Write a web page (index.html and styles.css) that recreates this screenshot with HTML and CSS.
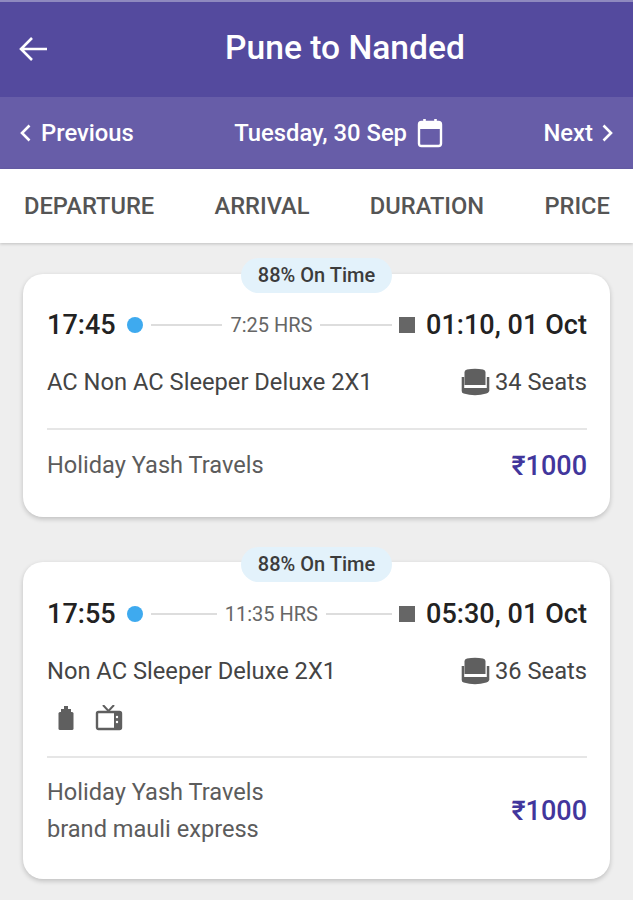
FILE: index.html
```html
<!DOCTYPE html>
<html lang="en">
<head>
<meta charset="utf-8">
<title>Pune to Nanded</title>
<link rel="stylesheet" href="styles.css">
</head>
<body>
<header class="appbar">
  <svg class="back" width="32" height="28" viewBox="0 0 32 28"><path d="M29 14H3M14 3 3 14l11 11" fill="none" stroke="#fff" stroke-width="2.600"/></svg>
  <h1 class="title">Pune to Nanded</h1>
</header>
<nav class="datebar">
  <div class="navlink prev">
    <svg width="12" height="20" viewBox="0 0 12 20"><path d="M10.500 2.500 3 10l7.500 7.500" fill="none" stroke="#fff" stroke-width="2.600"/></svg>
    <span>Previous</span>
  </div>
  <div class="date">
    <span>Tuesday, 30 Sep</span>
    <svg width="26" height="30" viewBox="0 0 26 30"><path d="M2 6.500Q2 4 4.500 4h17Q24 4 24 6.500v19q0 2.500-2.500 2.500h-17Q2 28 2 25.500z" fill="none" stroke="#fff" stroke-width="2.400"/><path d="M2 5h22v6H2z" fill="#fff"/><path d="M7.500 1v5M18.500 1v5" stroke="#fff" stroke-width="2.600"/></svg>
  </div>
  <div class="navlink">
    <span>Next</span>
    <svg width="12" height="20" viewBox="0 0 12 20"><path d="M1.500 2.500 9 10l-7.500 7.500" fill="none" stroke="#fff" stroke-width="2.600"/></svg>
  </div>
</nav>
<div class="tabs">
  <span>DEPARTURE</span><span>ARRIVAL</span><span>DURATION</span><span>PRICE</span>
</div>
<main class="list">
  <article class="card">
    <div class="badge">88% On Time</div>
    <div class="times">
      <strong class="time">17:45</strong>
      <i class="dot"></i>
      <i class="line"></i>
      <span class="dur">7:25 HRS</span>
      <i class="line"></i>
      <i class="stop"></i>
      <strong class="time">01:10, 01 Oct</strong>
    </div>
    <div class="info">
      <span>AC Non AC Sleeper Deluxe 2X1</span>
      <span class="seats">
        <svg width="29" height="30" viewBox="0 0 29 30"><path d="M3.500 5Q3.500 3 6 2.500q8-1.500 16 0 2.500.5 2.500 2.500V18H3.500z" fill="#5f5f5f"/><path d="M.7 10v14q0 2 2 2.500 11.300 3.500 22.600 0 2-.500 3-2.500V10h-2.500v11H3.200V10z" fill="#5f5f5f"/></svg>
        34 Seats
      </span>
    </div>
    <div class="foot">
      <div class="op">Holiday Yash Travels</div>
      <div class="price">₹1000</div>
    </div>
  </article>
  <article class="card">
    <div class="badge">88% On Time</div>
    <div class="times">
      <strong class="time">17:55</strong>
      <i class="dot"></i>
      <i class="line"></i>
      <span class="dur">11:35 HRS</span>
      <i class="line"></i>
      <i class="stop"></i>
      <strong class="time">05:30, 01 Oct</strong>
    </div>
    <div class="info">
      <span>Non AC Sleeper Deluxe 2X1</span>
      <span class="seats">
        <svg width="29" height="30" viewBox="0 0 29 30"><path d="M3.500 5Q3.500 3 6 2.500q8-1.500 16 0 2.500.5 2.500 2.500V18H3.500z" fill="#5f5f5f"/><path d="M.7 10v14q0 2 2 2.500 11.300 3.500 22.600 0 2-.500 3-2.500V10h-2.500v11H3.200V10z" fill="#5f5f5f"/></svg>
        36 Seats
      </span>
    </div>
    <div class="amen">
      <svg width="18" height="26" viewBox="0 0 18 26"><path d="M7 1h4v3h3v3H4V4h3z" fill="#5f5f5f"/><rect x="1.500" y="7" width="15" height="18" rx="1.500" fill="#5f5f5f"/></svg>
      <svg width="28" height="26" viewBox="0 0 28 26"><path d="M8 0l5.500 6L19 0" fill="none" stroke="#5f5f5f" stroke-width="2"/><rect x="2" y="7" width="24" height="17" rx="1.500" fill="none" stroke="#5f5f5f" stroke-width="2.400"/><rect x="19" y="8" width="6" height="15" fill="#5f5f5f"/><circle cx="22" cy="12" r="1.200" fill="#fff"/><circle cx="22" cy="17" r="1.200" fill="#fff"/></svg>
    </div>
    <div class="foot">
      <div class="op">Holiday Yash Travels<br>brand mauli express</div>
      <div class="price">₹1000</div>
    </div>
  </article>
</main>
</body>
</html>
```
FILE: styles.css
```css
* { box-sizing: border-box; }
html, body { margin: 0; height: 900px; overflow: hidden; }
body { background: #eeeeee; font-family: Roboto, "Liberation Sans", sans-serif; color: #333; }

.appbar {
  height: 97px;
  background: #544a9e;
  border-top: 2px solid #8f89bf;
  display: flex;
  align-items: center;
}
.back { margin: -2px 0 0 18px; }
.title {
  flex: 1;
  margin: -4px 0 0 0;
  text-align: center;
  color: #fff;
  font-size: 33.6px;
  font-weight: 500;
  transform: translateX(3.5px);
}

.datebar {
  height: 72px;
  background: #675da8;
  color: #fff;
  font-size: 23.8px;
  font-weight: 500;
  display: flex;
  align-items: center;
  justify-content: space-between;
  padding: 0 19px;
}
.navlink { display: flex; align-items: center; gap: 9px; }
.prev { gap: 10px; }
.date { display: flex; align-items: center; gap: 10px; }

.tabs {
  height: 74px;
  background: #fff;
  box-shadow: 0 1px 3px rgba(0,0,0,.2);
  color: #555;
  font-size: 23.7px;
  font-weight: 500;
  display: flex;
  align-items: center;
  justify-content: space-between;
  padding: 0 23px 0 24px;
  position: relative;
}

.list { padding: 31px 23px 0; display: flex; flex-direction: column; gap: 45px; }

.card {
  position: relative;
  background: #fff;
  border-radius: 20px;
  box-shadow: 0 2px 5px rgba(0,0,0,.2);
  padding: 26px 23px 0 24px;
}
.card + .card { padding-top: 27px; }
.badge {
  position: absolute;
  top: -16px;
  left: 218px;
  width: 151px;
  height: 35px;
  line-height: 35px;
  text-align: center;
  border-radius: 18px;
  background: #e3f2fb;
  font-size: 20px;
  font-weight: 500;
  color: #3c3c3c;
}
.card + .card .badge { top: -15px; }

.times { display: flex; align-items: center; height: 50px; }
.time { font-size: 27px; font-weight: 500; color: #222; letter-spacing: .05px; white-space: nowrap; }
.dot { flex: none; width: 16px; height: 16px; border-radius: 50%; background: #3eaaef; margin: 0 8px 0 11px; }
.line { flex: 1; height: 2px; background: #ddd; }
.dur { font-size: 20px; color: #666; margin: 0 8px; white-space: nowrap; }
.stop { flex: none; width: 16px; height: 16px; background: #666; margin: 0 11px 0 7px; }

.info {
  display: flex;
  justify-content: space-between;
  align-items: center;
  font-size: 23.7px;
  color: #444;
  height: 36px;
  margin-top: 14px;
}
.seats { display: flex; align-items: center; gap: 5px; }

.amen { display: flex; align-items: center; gap: 20px; padding-left: 10px; height: 40px; margin-top: 9px; }

.foot {
  display: flex;
  justify-content: space-between;
  align-items: center;
  border-top: 2px solid #e6e6e6;
  margin-top: 28px;
  padding: 17px 0 32px;
  font-size: 23.6px;
  color: #5c5c5c;
}
.amen + .foot { margin-top: 18px; padding: 16px 0 30px; }
.op { line-height: 37.500px; }
.price { font-size: 27px; font-weight: 500; color: #42369c; }
```
